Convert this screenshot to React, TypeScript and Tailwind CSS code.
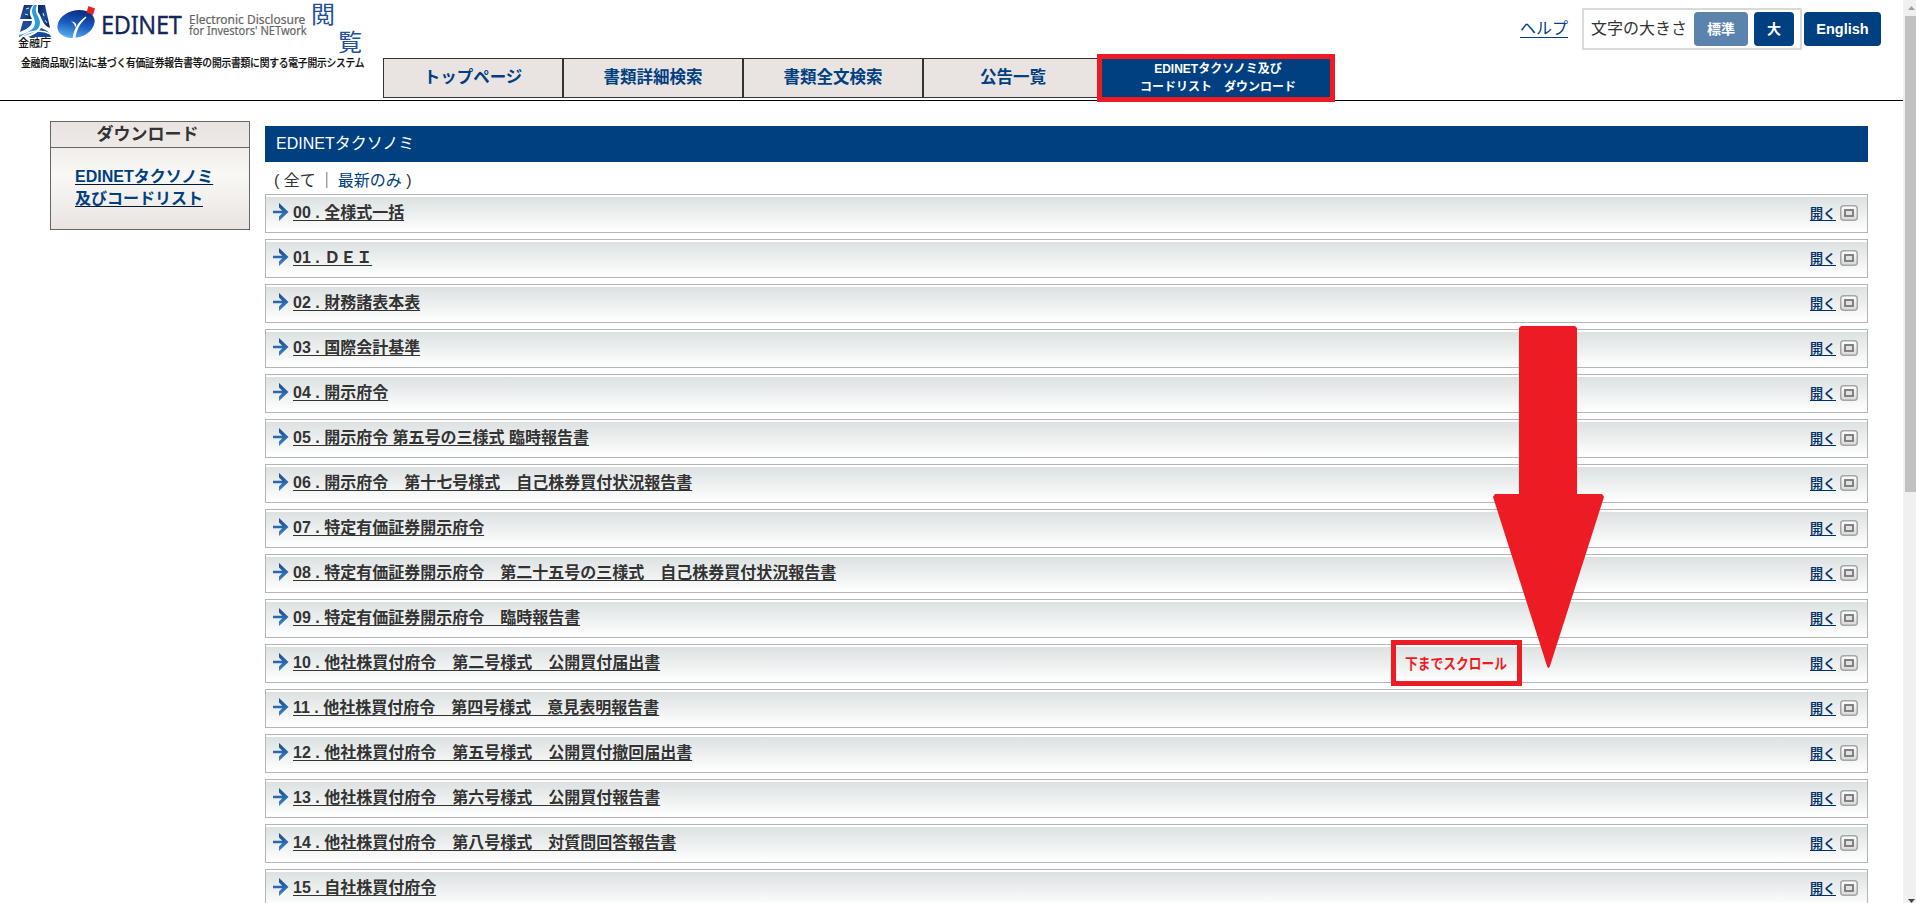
const rows: string[] = [
  "00 . 全様式一括",
  "01 . ＤＥＩ",
  "02 . 財務諸表本表",
  "03 . 国際会計基準",
  "04 . 開示府令",
  "05 . 開示府令 第五号の三様式 臨時報告書",
  "06 . 開示府令　第十七号様式　自己株券買付状況報告書",
  "07 . 特定有価証券開示府令",
  "08 . 特定有価証券開示府令　第二十五号の三様式　自己株券買付状況報告書",
  "09 . 特定有価証券開示府令　臨時報告書",
  "10 . 他社株買付府令　第二号様式　公開買付届出書",
  "11 . 他社株買付府令　第四号様式　意見表明報告書",
  "12 . 他社株買付府令　第五号様式　公開買付撤回届出書",
  "13 . 他社株買付府令　第六号様式　公開買付報告書",
  "14 . 他社株買付府令　第八号様式　対質問回答報告書",
  "15 . 自社株買付府令",
];

const tabs: string[] = ["トップページ", "書類詳細検索", "書類全文検索", "公告一覧"];

function AgencyMark() {
  return (
    <svg width="34" height="34" viewBox="0 0 34 34" className="block">
      <defs>
        <linearGradient id="fsa" x1="0" y1="0" x2="1" y2="1">
          <stop offset="0" stopColor="#0a1c50" />
          <stop offset="0.5" stopColor="#1c4f9e" />
          <stop offset="1" stopColor="#0a1c50" />
        </linearGradient>
      </defs>
      <path d="M6 1H15C11 6 11 10 14 15H2Z" fill="url(#fsa)" />
      <path d="M20 1H27L32 24C24 21 24 13 20 8Z" fill="url(#fsa)" />
      <path d="M16 1H19C15 9 22 12 22 19C22 27 12 31 1 33V31C10 29 17 25 17 19C17 12 11 9 16 1Z" fill="#2c9bdb" />
      <path d="M5 17H14C14 22 9 25 2 28Z" fill="#1d4c98" />
      <path d="M23 24C28 26 31 27 33 33H10C16 31 21 28 23 24Z" fill="#174a98" />
      <path d="M3 33C14 25 24 26 33 30" fill="none" stroke="#fff" strokeWidth="1.500" />
      <path d="M8 5L11 4M7 10L10 11M25 9L26 12M27 16L29 19" stroke="#cfe0f2" strokeWidth="1" />
    </svg>
  );
}

function GlobeMark() {
  return (
    <svg width="40" height="36" viewBox="0 0 40 36" className="block">
      <defs>
        <linearGradient id="globe" x1="0.9" y1="0.2" x2="0.3" y2="1">
          <stop offset="0" stopColor="#0a2c7c" />
          <stop offset="0.5" stopColor="#1a5cc0" />
          <stop offset="1" stopColor="#5cb0f0" />
        </linearGradient>
      </defs>
      <ellipse cx="19" cy="20" rx="19" ry="13.500" transform="rotate(-16 19 20)" fill="url(#globe)" />
      <path d="M15.500 34C17 25 21 18 28.500 12.500L29.500 13.500C23 19 19.500 26 18.500 34Z" fill="#fff" />
      <path d="M14 17.500C16 18 17.500 20.500 18.300 23.500L19.500 21C18.500 18.500 16.500 17.200 14 17.500Z" fill="#fff" />
      <path d="M31.500 2L38 4.500L36 11L29.500 8.500Z" fill="#e6211f" />
    </svg>
  );
}

function RowArrow() {
  return (
    <svg width="16" height="18" viewBox="0 0 16 18" className="block">
      <defs>
        <linearGradient id="arrow" x1="0" y1="0" x2="0" y2="1">
          <stop offset="0" stopColor="#174a8c" />
          <stop offset="1" stopColor="#3c86cc" />
        </linearGradient>
      </defs>
      <path d="M6 0L15.500 9L6 18V13.500L9.200 10.300H0V7.700H9.200L6 4.500Z" fill="url(#arrow)" />
    </svg>
  );
}

function WindowIcon() {
  return (
    <svg width="18" height="16" viewBox="0 0 18 16" className="block">
      <defs>
        <linearGradient id="key" x1="0" y1="0" x2="0" y2="1">
          <stop offset="0" stopColor="#ffffff" />
          <stop offset="1" stopColor="#d8d8d8" />
        </linearGradient>
      </defs>
      <rect x="0.750" y="0.750" width="16.500" height="14.500" rx="3" fill="url(#key)" stroke="#a5a5a5" strokeWidth="1.500" />
      <rect x="5" y="5" width="8" height="6" fill="#e2e2e2" stroke="#777" strokeWidth="1.800" />
    </svg>
  );
}

function Logo() {
  return (
    <div className="relative h-[72px] w-[382px] shrink-0">
      <div className="absolute left-[18px] top-[4px]"><AgencyMark /></div>
      <div className="absolute left-[18px] top-[35px] text-[11px] leading-[16px] font-medium text-[#111] whitespace-nowrap">金融庁</div>
      <div className="absolute left-[57px] top-[4px]"><GlobeMark /></div>
      <div className="absolute left-[101px] top-[8px] origin-left scale-x-[0.940] font-['Noto_Sans'] text-[25px] leading-[32px] tracking-[-0.3px] text-[#14285c] [-webkit-text-stroke:0.3px_#14285c]">EDINET</div>
      <div className="absolute left-[189px] top-[14px] font-['Noto_Sans'] text-[12px] leading-[11px] text-[#666] whitespace-nowrap [-webkit-text-stroke:0.2px_#666]">
        <div>Electronic Disclosure</div>
        <div className="origin-left scale-x-[0.920]">for Investors' NETwork</div>
      </div>
      <div className="absolute left-[311px] top-[-1px] text-[24px] leading-[32px] text-[#234f9c]">閲</div>
      <div className="absolute left-[338px] top-[27px] text-[24px] leading-[32px] text-[#234f9c]">覧</div>
      <div className="absolute left-[21px] top-[55px] origin-left scale-x-[0.888] text-[11px] leading-[16px] tracking-[-0.25px] text-[#111] font-medium whitespace-nowrap [-webkit-text-stroke:0.2px_#111]">金融商品取引法に基づく有価証券報告書等の開示書類に関する電子開示システム</div>
    </div>
  );
}

function Header() {
  return (
    <header className="relative h-[101px] border-b border-black">
      <div className="flex justify-between pr-[22px]">
        <Logo />
        <div className="flex h-[42px] mt-2 items-center text-[#333]">
          <a className="mr-[14px] text-[16px] text-[#004080] underline underline-offset-[3px]">ヘルプ</a>
          <div className="flex h-[42px] w-[220px] items-center border-2 border-[#d9d9d9] pl-[7px]">
            <span className="w-[103px] text-[16px] whitespace-nowrap">文字の大きさ</span>
            <span className="flex h-[34px] w-[54px] items-center justify-center rounded bg-[#5b83ae] text-[14px] font-bold text-white">標準</span>
            <span className="ml-[6px] flex h-[34px] w-[40px] items-center justify-center rounded bg-[#004080] text-[14px] font-bold text-white">大</span>
          </div>
          <span className="ml-[2px] flex h-[34px] w-[77px] items-center justify-center rounded bg-[#004080] pt-px text-[14.500px] font-bold text-white">English</span>
        </div>
      </div>
      <nav className="absolute left-[383px] top-[58px] flex h-[40px]">
        {tabs.map((t) => (
          <div key={t} className="w-[180px] border border-[#333] bg-[#e9e4e2] text-center text-[16.500px] leading-[37px] font-bold text-[#004080]">{t}</div>
        ))}
        <div className="absolute left-[714px] -top-[4px] h-[48px] w-[238px] border-5 border-[#ed1c24] bg-[#004080] pt-[2px] pl-[4px] text-center text-[12px] leading-[17.500px] font-bold text-white">
          <div>EDINETタクソノミ及び</div>
          <div>コードリスト　ダウンロード</div>
        </div>
      </nav>
    </header>
  );
}

function Sidebar() {
  return (
    <aside className="mt-[20px] h-[109px] w-[200px] shrink-0 border border-[#666] bg-[linear-gradient(#e9e4e2,#f9f8f5_50%,#e9e4e2)] text-[16px] font-bold">
      <div className="h-[26px] border-b border-[#666] bg-[linear-gradient(#e9e4e2,#eeeae7)] pr-[5px] text-center text-[17px] leading-[25px] text-[#333]">ダウンロード</div>
      <div className="pl-[24px] pt-[18px] leading-[22px] text-[#004080] underline decoration-[#001a33] decoration-1 underline-offset-[2px]">
        <div>EDINETタクソノミ</div>
        <div>及びコードリスト</div>
      </div>
    </aside>
  );
}

function Row({ label }: { label: string }) {
  return (
    <div className="flex h-[39px] shrink-0 items-start border border-[#b5b5b5] bg-white pt-[2px]">
      <div className="flex h-[35px] w-full items-start bg-[linear-gradient(#dde1e1,#ffffff)] pl-[7px] pr-[9px]">
        <div className="pt-[6px]"><RowArrow /></div>
        <a className="ml-[4px] text-[16px] leading-[32px] font-bold text-[#333] underline decoration-1 underline-offset-[2px] whitespace-nowrap">{label}</a>
        <a className="ml-auto pt-[2px] text-[13px] leading-[30px] font-medium text-[#003066] underline decoration-1 underline-offset-[2px] [-webkit-text-stroke:0.2px_#003066]">開く</a>
        <div className="ml-[4px] pt-[8px]"><WindowIcon /></div>
      </div>
    </div>
  );
}

function Scrollbar() {
  return (
    <div className="flex w-[13px] shrink-0 flex-col justify-between bg-[#f0f0f0]">
      <div className="pl-[2px]">
        <svg width="11" height="16" className="block"><path d="M3 10L6.500 6L10 10Z" fill="#a0a0a0" /></svg>
        <div className="h-[476px] bg-[#c1c1c1]" />
      </div>
      <svg width="13" height="6" className="block"><path d="M5 2H12L8.500 6Z" fill="#444" /></svg>
    </div>
  );
}

export default function App() {
  return (
    <div className="relative flex h-[903px] w-[1916px] overflow-hidden bg-white font-['Liberation_Sans','Noto_Sans_CJK_JP',sans-serif]">
      <div className="w-[1903px] shrink-0">
        <Header />
        <div className="flex gap-[15px] pl-[50px]">
          <Sidebar />
          <main className="mt-[25px] w-[1603px]">
            <h1 className="h-[36px] bg-[#004080] pl-[11px] text-[16px] leading-[36px] text-white">EDINETタクソノミ</h1>
            <p className="h-[32px] pl-[9px] text-[16px] leading-[37px] whitespace-pre text-[#333]">( 全て<span className="ml-[3px]">｜</span><a className="ml-[3px] text-[#004080]">最新のみ</a> )</p>
            <div className="flex flex-col gap-[6px]">
              {rows.map((r) => <Row key={r} label={r} />)}
            </div>
          </main>
        </div>
      </div>
      <Scrollbar />
      <svg width="112" height="344" viewBox="0 0 112 344" className="absolute left-[1492px] top-[325px]">
        <path d="M29 1H83L85 3V169H110L112 172L58 341Q56.500 345 55 341L1 172L3 169H27V3Z" fill="#ed1c24" />
      </svg>
      <div className="absolute left-[1391px] top-[640px] flex h-[46px] w-[131px] items-center justify-center border-5 border-[#ed1c24] pt-[2px] text-[15px] font-bold text-[#ed1c24]">
        <span className="inline-block scale-x-[0.850] whitespace-nowrap">下までスクロール</span>
      </div>
    </div>
  );
}
